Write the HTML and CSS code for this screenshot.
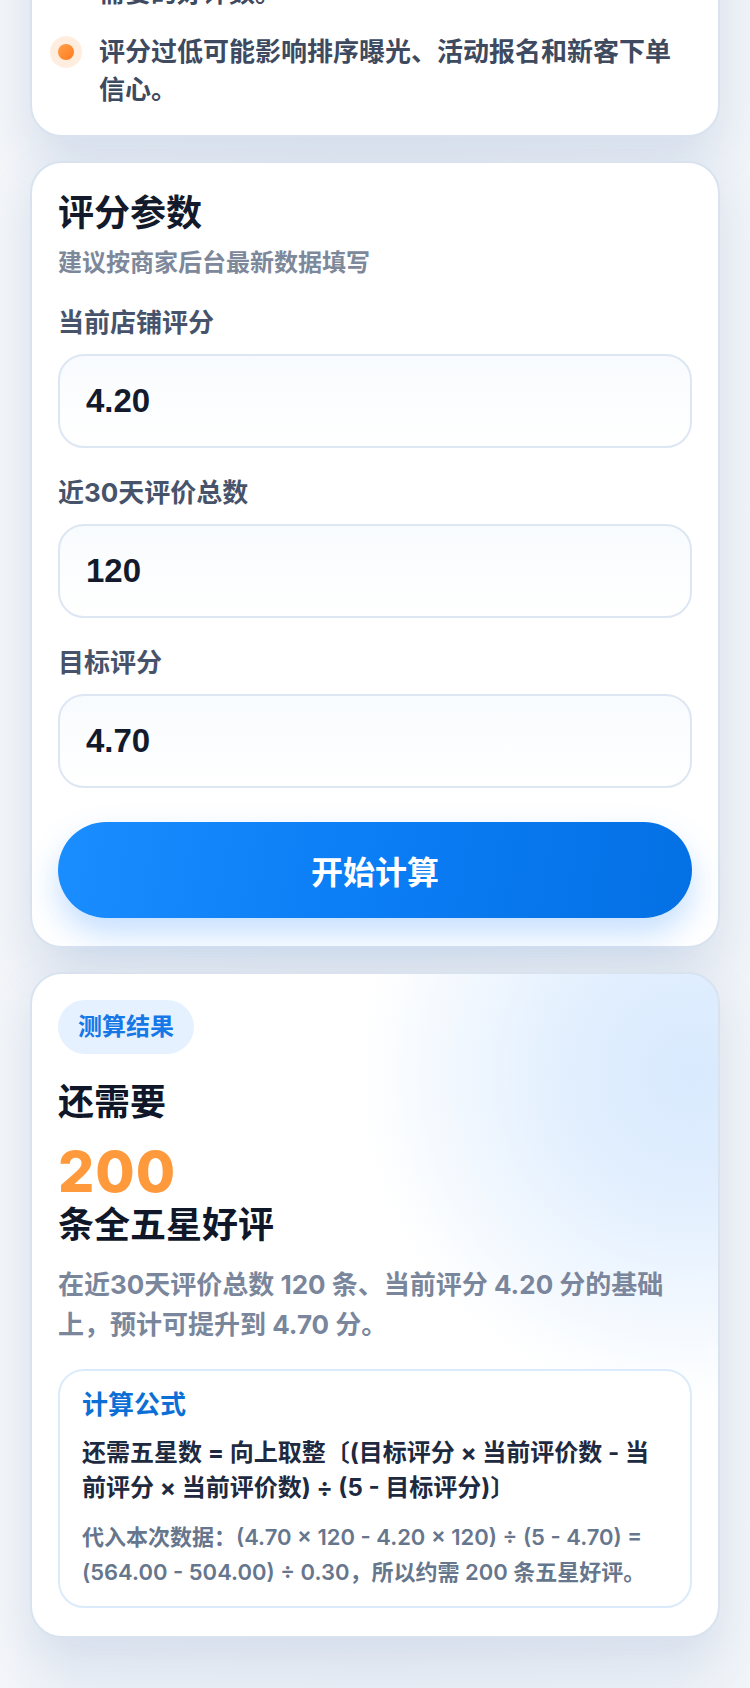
FILE: index.html
```html
<!DOCTYPE html>
<html lang="zh-CN">
<head>
<meta charset="utf-8">
<meta name="viewport" content="width=750">
<title>好评计算器</title>
<link rel="stylesheet" href="styles.css">
</head>
<body>
<main class="page">
  <section class="card card-tips">
    <ul class="tips">
      <li class="tip"><span class="tip-dot"></span><p class="tip-text">根据当前评分与评价总数，估算要达到目标评分还需要的好评数。</p></li>
      <li class="tip"><span class="tip-dot"></span><p class="tip-text">评分过低可能影响排序曝光、活动报名和新客下单信心。</p></li>
    </ul>
  </section>

  <section class="card card-form">
    <h2 class="card-title">评分参数</h2>
    <p class="card-sub">建议按商家后台最新数据填写</p>
    <form class="form">
      <label class="field">
        <span class="field-label">当前店铺评分</span>
        <input class="field-input" type="text" value="4.20">
      </label>
      <label class="field">
        <span class="field-label">近30天评价总数</span>
        <input class="field-input" type="text" value="120">
      </label>
      <label class="field">
        <span class="field-label">目标评分</span>
        <input class="field-input" type="text" value="4.70">
      </label>
      <button class="btn" type="button">开始计算</button>
    </form>
  </section>

  <section class="card card-result">
    <span class="badge">测算结果</span>
    <p class="result-pre">还需要</p>
    <p class="result-num">200</p>
    <p class="result-unit">条全五星好评</p>
    <p class="result-desc">在近30天评价总数 120 条、当前评分 4.20 分的基础上，预计可提升到 4.70 分。</p>
    <div class="formula">
      <h3 class="formula-title">计算公式</h3>
      <p class="formula-main">还需五星数 = 向上取整〔(目标评分 × 当前评价数 - 当前评分 × 当前评价数) ÷ (5 - 目标评分)〕</p>
      <p class="formula-sub">代入本次数据：(4.70 × 120 - 4.20 × 120) ÷ (5 - 4.70) = (564.00 - 504.00) ÷ 0.30，所以约需 200 条五星好评。</p>
    </div>
  </section>
</main>
</body>
</html>
```

FILE: styles.css
```css
* {
  box-sizing: border-box;
  margin: 0;
  padding: 0;
}

html,
body {
  width: 750px;
}

body {
  min-height: 1688px;
  overflow: hidden;
  background: linear-gradient(90deg, #f3f5f9 0%, #eaeff6 10%, #e8edf5 50%, #eaeff6 90%, #f1f4f8 100%);
  font-family: Inter, "Noto Sans CJK SC", sans-serif;
  color: #0f172a;
}

.page {
  display: flex;
  flex-direction: column;
  gap: 24px;
  padding: 0 30px 50px;
}

.card {
  background: #fff;
  border: 2px solid #d9e3ef;
  border-radius: 32px;
  box-shadow: 0 20px 44px rgba(110, 140, 185, 0.17);
  padding: 27px 26px 28px;
}

/* tips card (scrolled partially out of view) */
.card-tips {
  margin-top: -92px;
  padding: 26px 26px 26px;
}

.tips {
  list-style: none;
  display: flex;
  flex-direction: column;
  gap: 21px;
}

.tip {
  display: flex;
  align-items: flex-start;
  gap: 17px;
  margin-left: -8px;
}

.tip-dot {
  flex: none;
  width: 32px;
  height: 32px;
  margin-top: 3px;
  border-radius: 50%;
  background: #ffeee0;
  display: flex;
  align-items: center;
  justify-content: center;
}

.tip-dot::after {
  content: "";
  width: 16px;
  height: 16px;
  border-radius: 50%;
  background: linear-gradient(135deg, #ffa14a, #ff7a1c);
}

.tip-text {
  font-size: 26px;
  line-height: 38px;
  font-weight: 700;
  color: #3e4a5f;
}

/* form card */
.card-title {
  font-size: 36px;
  line-height: 46px;
  font-weight: 700;
  color: #121a2b;
}

.card-sub {
  margin-top: 10px;
  font-size: 24px;
  line-height: 34px;
  font-weight: 700;
  color: #7d889a;
}

.form {
  margin-top: 25px;
  display: flex;
  flex-direction: column;
  gap: 27px;
}

.field {
  display: flex;
  flex-direction: column;
  gap: 13px;
}

.field-label {
  font-size: 26px;
  line-height: 36px;
  font-weight: 700;
  color: #46536a;
}

.field-input {
  width: 100%;
  height: 94px;
  padding: 0 26px;
  border: 2px solid #dde7f3;
  border-radius: 26px;
  background: linear-gradient(180deg, #f8fbfe 0%, #ffffff 100%);
  font-family: "Liberation Sans", Arial, sans-serif;
  font-size: 33px;
  font-weight: 700;
  color: #121a2c;
  outline: none;
}

.btn {
  margin-top: 7px;
  height: 96px;
  border: none;
  border-radius: 48px;
  background: linear-gradient(100deg, #1a8dff 0%, #0b7df5 50%, #0470e4 100%);
  box-shadow: 0 16px 32px rgba(30, 130, 255, 0.26);
  font-family: Inter, "Noto Sans CJK SC", sans-serif;
  font-size: 32px;
  font-weight: 700;
  color: #fff;
}

/* result card */
.card-result {
  padding-top: 26px;
  display: flex;
  flex-direction: column;
  align-items: flex-start;
  background:
    radial-gradient(ellipse 330px 330px at 96% 15%, #d9eafe 0%, rgba(217, 234, 254, 0.8) 35%, rgba(255, 255, 255, 0) 100%),
    #fff;
}

.badge {
  height: 54px;
  padding: 0 20px;
  border-radius: 27px;
  background: #e5f1ff;
  font-size: 24px;
  line-height: 54px;
  font-weight: 700;
  color: #1677e6;
}

.result-pre {
  margin-top: 24px;
  font-size: 36px;
  line-height: 48px;
  font-weight: 700;
  color: #0f1729;
}

.result-num {
  margin-top: 16px;
  font-size: 57px;
  line-height: 60px;
  font-weight: 800;
  letter-spacing: 1px;
  color: #ff9a3c;
}

.result-unit {
  font-size: 36px;
  line-height: 46px;
  font-weight: 700;
  color: #0f1729;
}

.result-desc {
  margin-top: 17px;
  max-width: 624px;
  font-size: 26px;
  line-height: 40px;
  font-weight: 700;
  color: #7a869b;
}

.formula {
  align-self: stretch;
  margin-top: 24px;
  padding: 16px 22px;
  border: 2px solid #dcebfc;
  border-radius: 26px;
  background: #fff;
}

.formula-title {
  font-size: 26px;
  line-height: 36px;
  font-weight: 700;
  color: #0b6fd6;
}

.formula-main {
  margin-top: 12px;
  font-size: 24px;
  line-height: 35px;
  font-weight: 700;
  color: #1e2a40;
}

.formula-sub {
  margin-top: 15px;
  font-size: 22px;
  line-height: 35px;
  font-weight: 600;
  color: #66768d;
}
```
